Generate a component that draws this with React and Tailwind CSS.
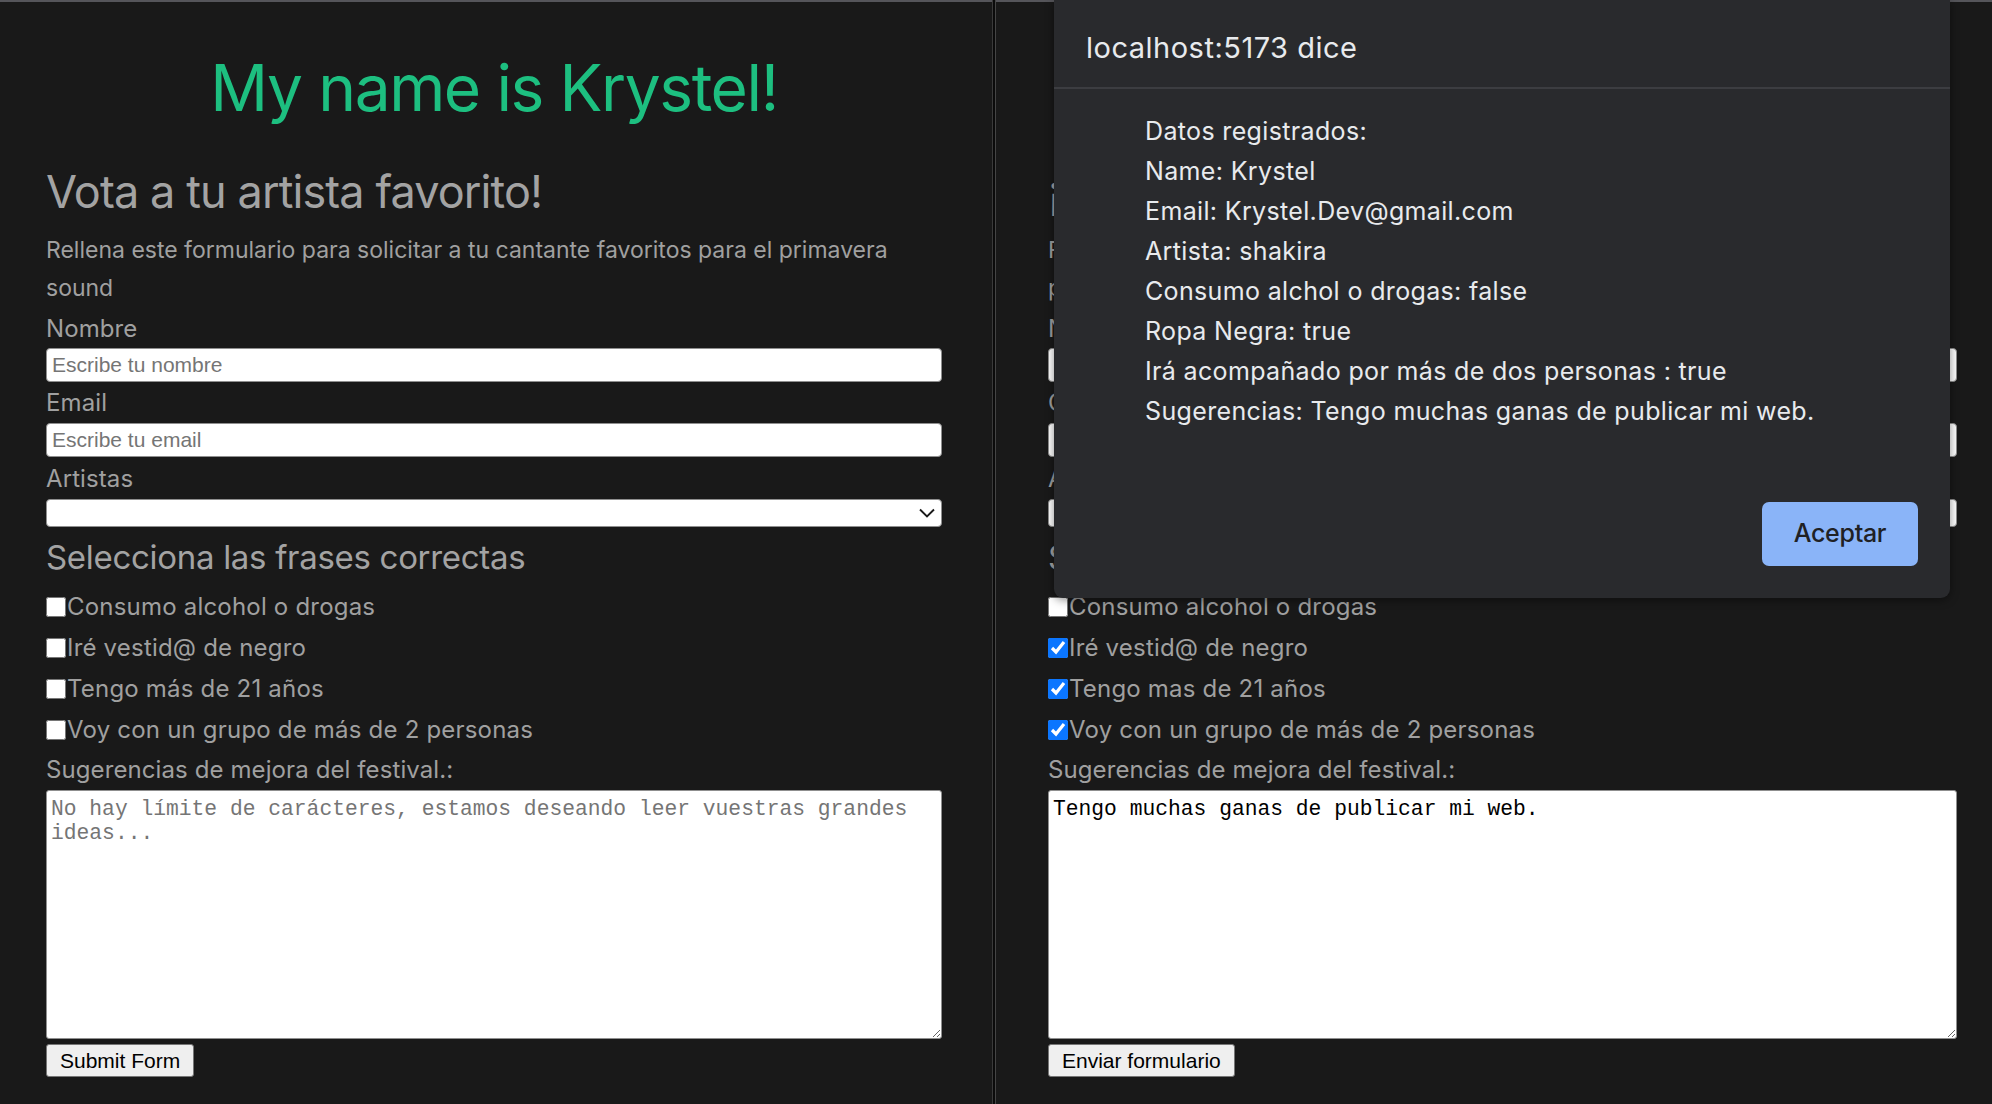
import { useState } from "react";

const checks = [
  "Consumo alcohol o drogas",
  "Iré vestid@ de negro",
  "Tengo más de 21 años",
  "Voy con un grupo de más de 2 personas",
];

const checksEs = [
  "Consumo alcohol o drogas",
  "Iré vestid@ de negro",
  "Tengo mas de 21 años",
  "Voy con un grupo de más de 2 personas",
];

function Form({ right }) {
  const [values] = useState(right ? [false, true, true, true] : [false, false, false, false]);
  const labels = right ? checksEs : checks;

  return (
    <form className="flex flex-col">
      <h1 className="mt-[51px] text-center text-[64px] leading-[70px] tracking-[-1.4px] text-[#1dbf80]">
        My name is Krystel!
      </h1>
      <h2 className="mt-[42px] text-[45px] leading-[54px] tracking-[-0.9px] text-[#a3a3a3]">
        {right ? "¡Vota a tu artista favorito!" : "Vota a tu artista favorito!"}
      </h2>
      <p className="mt-[12px] text-[23px] leading-[38px] text-[#a0a0a0]">
        Rellena este formulario para solicitar a tu cantante favoritos para el
        {right ? <br /> : " "}primavera sound
      </p>

      <label className="mt-[5px] text-[24px] leading-[34px] tracking-[0.1px] text-[#a0a0a0]">Nombre</label>
      <input
        type="text"
        readOnly
        defaultValue={right ? "Krystel" : ""}
        placeholder="Escribe tu nombre"
        className="mt-[2px] h-[34px] w-full rounded-[4px] border border-[#8f8f8f] bg-white px-[5px] font-['Liberation_Sans'] text-[21px] text-black placeholder:text-[#757575] outline-none"
      />

      <label className="mt-[4px] text-[24px] leading-[34px] tracking-[0.1px] text-[#a0a0a0]">
        {right ? "Correo electrónico" : "Email"}
      </label>
      <input
        type="text"
        readOnly
        defaultValue={right ? "Krystel.Dev@gmail.com" : ""}
        placeholder="Escribe tu email"
        className="mt-[3px] h-[34px] w-full rounded-[4px] border border-[#8f8f8f] bg-white px-[5px] font-['Liberation_Sans'] text-[21px] text-black placeholder:text-[#757575] outline-none"
      />

      <label className="mt-[5px] text-[24px] leading-[34px] tracking-[0.1px] text-[#a0a0a0]">Artistas</label>
      <div className="mt-[3px] flex h-[28px] w-full items-center justify-between rounded-[4px] border border-[#8f8f8f] bg-white pl-[6px] pr-[5px] font-['Liberation_Sans'] text-[21px] text-black">
        <span>{right ? "shakira" : ""}</span>
        <svg width="18" height="12" viewBox="0 0 18 12">
          <path d="M2 2.5 L9 9.5 L16 2.5" fill="none" stroke="#1a1a1a" strokeWidth="1.9" />
        </svg>
      </div>

      <h3 className="mt-[8px] text-[33px] leading-[44px] tracking-[-0.3px] text-[#a3a3a3]">
        Selecciona las frases correctas
      </h3>

      <div className="mt-[7px] flex flex-col">
        {labels.map((text, i) => (
          <label key={text} className="flex h-[41px] items-center text-[24px] tracking-[0.2px] text-[#a0a0a0]">
            <input
              type="checkbox"
              readOnly
              checked={values[i]}
              className="m-0 h-[20px] w-[20px] accent-[#0b76ff]"
            />
            <span className="ml-[1px]">{text}</span>
          </label>
        ))}
      </div>

      <label className="mt-[3px] text-[24px] leading-[34px] tracking-[0.1px] text-[#a0a0a0]">
        Sugerencias de mejora del festival.:
      </label>
      <textarea
        readOnly
        defaultValue={right ? "Tengo muchas ganas de publicar mi web." : ""}
        placeholder="No hay límite de carácteres, estamos deseando leer vuestras grandes ideas..."
        className="mt-[3px] h-[249px] w-full rounded-[3px] border border-[#8f8f8f] bg-white px-[4px] pt-[6px] font-['Liberation_Mono'] text-[21.3px] leading-[24px] text-black placeholder:text-[#757575] outline-none"
      />

      <div className="mt-[5px]">
        <button
          type="button"
          className="h-[33px] rounded-[3px] border border-[#767676] bg-[#efefef] px-[13px] font-['Liberation_Sans'] text-[21px] text-black"
        >
          {right ? "Enviar formulario" : "Submit Form"}
        </button>
      </div>
    </form>
  );
}

function AlertDialog() {
  const lines = [
    "Datos registrados:",
    "Name: Krystel",
    "Email: Krystel.Dev@gmail.com",
    "Artista: shakira",
    "Consumo alchol o drogas: false",
    "Ropa Negra: true",
    "Irá acompañado por más de dos personas : true",
    "Sugerencias: Tengo muchas ganas de publicar mi web.",
  ];

  return (
    <div className="absolute left-[1054px] top-0 flex h-[598px] w-[896px] flex-col rounded-b-[9px] bg-[#292a2d] shadow-[0_2px_10px_rgba(0,0,0,0.45)]">
      <div className="px-[32px] pt-[28px] pb-[19px] text-[29px] leading-[40px] tracking-[0.5px] text-[#e8eaed]">
        localhost:5173 dice
      </div>
      <div className="h-[2px] bg-[#3c3d41]" />
      <div className="mt-[22px] flex flex-col pl-[91px] text-[25px] leading-[40px] tracking-[0.35px] text-[#e8eaed]">
        {lines.map((l) => (
          <div key={l}>{l}</div>
        ))}
      </div>
      <div className="mt-auto flex justify-end px-[32px] pb-[32px]">
        <button
          type="button"
          className="h-[64px] w-[156px] rounded-[7px] bg-[#8ab4f8] text-[25px] font-medium tracking-[-0.3px] text-[#202124]"
        >
          Aceptar
        </button>
      </div>
    </div>
  );
}

export default function App() {
  return (
    <div className="relative flex h-[1104px] w-[1992px] overflow-hidden bg-[#191919] font-['Inter',sans-serif]">
      <div className="h-full w-[992px] border-t-2 border-[#55555a] pl-[46px] pr-[50px]">
        <Form />
      </div>
      <div className="h-full w-px bg-[#3a3a3a]" />
      <div className="h-full w-[2px] bg-[#0b0b0b]" />
      <div className="h-full w-px bg-[#454545]" />
      <div className="h-full flex-1 border-t-2 border-[#55555a] pl-[52px] pr-[35px]">
        <Form right />
      </div>
      <AlertDialog />
    </div>
  );
}
